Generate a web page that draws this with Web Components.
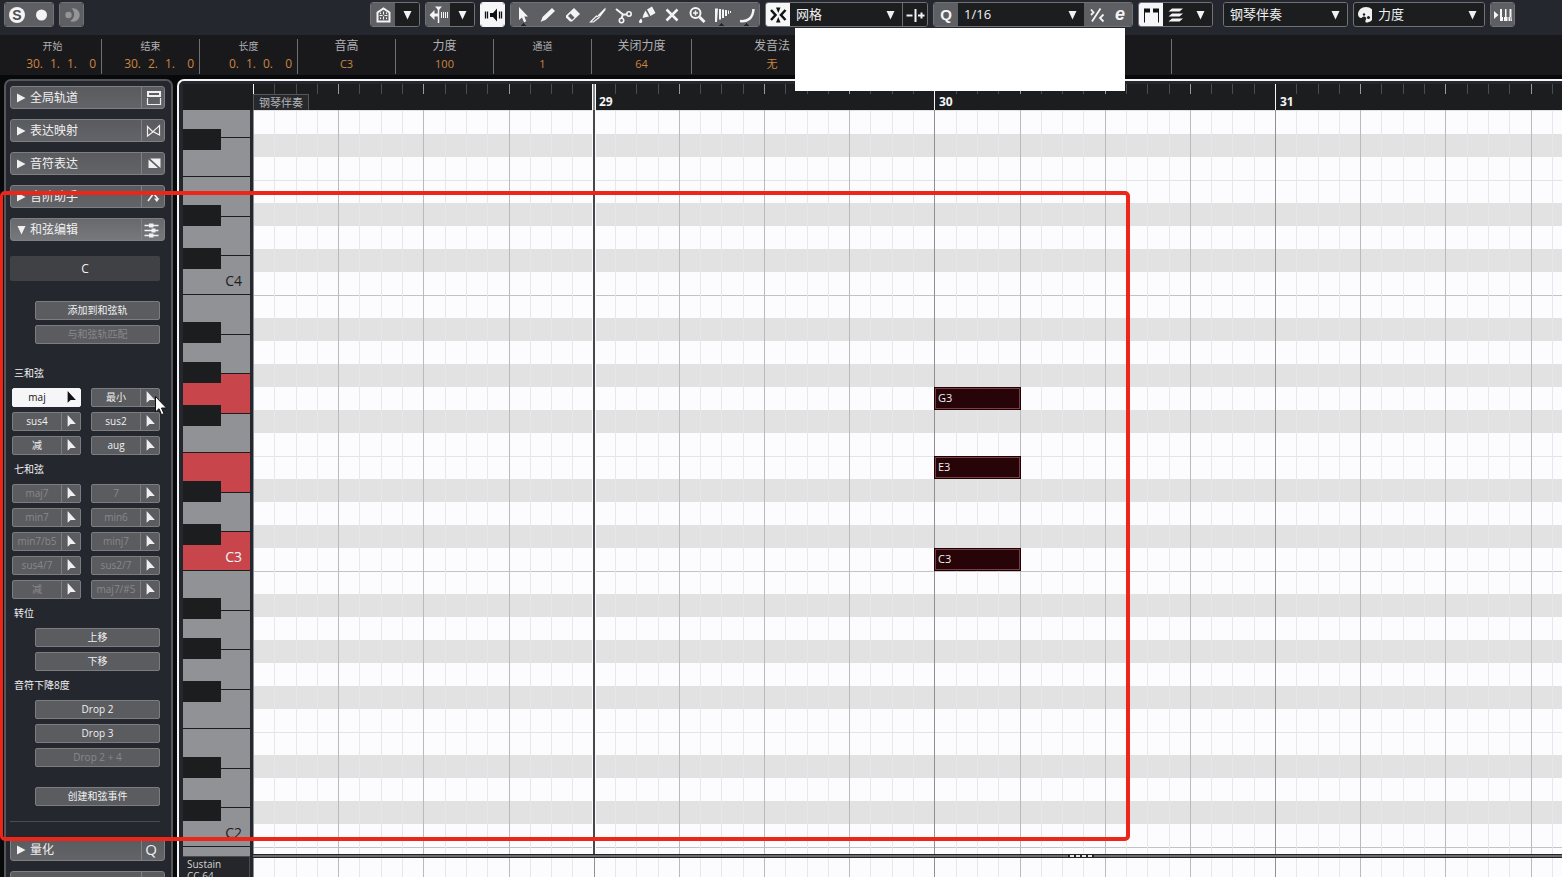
<!DOCTYPE html>
<html lang="zh-CN">
<head>
<meta charset="utf-8">
<title>钢琴伴奏</title>
<style>
  html, body {
    margin: 0;
    height: 100%;
  }
  body {
    overflow: hidden;
    background: #08090b;
    color: #f0f0f2;
    font: 12px/16px "Open Sans", "Noto Sans CJK SC", sans-serif;
  }
</style>
</head>
<body>
<key-editor></key-editor>

<script>
const ICONS = {
  solo: '<circle cx="12" cy="12" r="8" fill="currentColor"/><text x="12" y="17" text-anchor="middle" font-size="14" font-weight="800" fill="#4c4d50">S</text>',
  record: '<circle cx="12.500" cy="12" r="5.500" fill="currentColor"/>',
  moon: '<g fill="#949598"><circle cx="8.500" cy="12" r="3.200"/><path d="M11.500 5.500A6.700 6.700 0 1 1 10 18A7.500 7.500 0 0 0 11.500 5.500z"/></g>',
  home: '<path d="M6.500 18.500V9.500L12.500 5.500l6 4v9z" fill="none" stroke="currentColor" stroke-width="2"/><path d="M12.500 8.500v3M12.500 13.500v3M8.500 12.500h3M13.500 12.500h3M9.500 16v-1.500M15.500 16v-1.500M9.500 9.500V11M15.500 9.500V11" stroke="currentColor"/>',
  insert: '<path d="M3.500 12l5-5v3.500h3.500v3H8.500V17zM9 3.500h7l-3.500 4z" fill="currentColor"/><path d="M12.500 5v15" stroke="currentColor" stroke-width="1.500"/><path d="M15.500 9v6M17.500 9v6M19.500 9v6M21.500 9v6" stroke="currentColor"/>',
  speaker: '<path d="M9 10h3l4-4.500v13L12 14H9z" fill="currentColor"/><path d="M4.500 8.500v7M6.500 8.500v7M18.500 8.500v7M20.500 8.500v7" stroke="currentColor" stroke-width="1.300"/>',
  select: '<path d="M8 4v13l3-2.600 2 4.800 2.300-1-2-4.700H17z" fill="currentColor"/>',
  draw: '<path d="M5 18.500l1.500-4.500L16 5l3 3-9.500 9zM4.500 19l1-2 1 1z" fill="currentColor"/>',
  erase: '<path d="M5 12.500L13 5l6 6-8 7.500H9l-4-4z" fill="currentColor"/><path d="M7 13l2.500-2.500 4 4L11 17z" fill="#5e5f62"/>',
  trim: '<path d="M11.500 12.500L19.500 4.500v2.500L14 14z" fill="currentColor"/><path d="M10.500 13L4.500 19h3l5.500-4.500z" fill="none" stroke="currentColor" stroke-width="1.200"/>',
  split: '<g fill="none" stroke="currentColor" stroke-width="2"><path d="M5 6l7 5.500h4M12 11l-1.500 4.500"/><circle cx="18" cy="11" r="2.200" stroke-width="1.600"/><circle cx="10.500" cy="17.500" r="2.200" stroke-width="1.600"/></g>',
  glue: '<path d="M12 6.500l5-3 3.500 6.500-5 3zM10.500 7.500L14 13.500 9.500 14.500l-2 .5 1-3.500zM6 15.500c1.500 2 2 4.500-.5 4.500S4 17.500 6 15.500z" fill="currentColor"/>',
  mute: '<path d="M6.500 6.500l11 11M17.500 6.500l-11 11" stroke="currentColor" stroke-width="2.500"/>',
  zoom: '<g fill="none" stroke="currentColor"><circle cx="10.500" cy="10" r="5" stroke-width="2"/><path d="M14.500 14l5 5" stroke-width="3"/><path d="M8 10h5M10.500 7.500v5" stroke-width="1.500"/></g>',
  warp: '<path d="M5 5.500h3l-1 13.500H5zM9 6h2v10.500H9zM12 6.500h2V15h-2zM15 7h2v6h-2zM18 7.500h1V11h-1zM20 8h1v2h-1z" fill="currentColor"/>',
  line: '<path d="M5 18c8 1 13-3 13.500-12" fill="none" stroke="currentColor" stroke-width="2.500"/>',
  snap: '<path d="M5 7l4.500 5L5 17M19.500 7L15 12l4.500 5" fill="none" stroke="currentColor" stroke-width="2.500"/><path d="M10 4.500h4.500L12.250 10zM10 19.500h4.500L12.250 14z" fill="currentColor"/>',
  gridtype: '<path d="M3.500 12.500h6M12.500 6v13M15 12.500h6.500M18.500 9.500v6" fill="none" stroke="currentColor" stroke-width="2"/>',
  quantize: '<text x="12" y="17" text-anchor="middle" font-size="15" font-weight="600" fill="currentColor">Q</text>',
  swing: '<path d="M16.500 5.500L8 18.500M7 6.500l2.500 3L7 12M19.500 11.500L16 15l3.500 3.500" fill="none" stroke="currentColor" stroke-width="1.800"/>',
  setup: '<text x="12" y="17" text-anchor="middle" font-size="18" font-weight="600" font-style="italic" fill="currentColor">e</text>',
  brackets: '<path d="M5 5.500h6v4H6v10H5zM20 5.500h-6v4h5v10h1z" fill="currentColor"/>',
  layers: '<path d="M9 5.500h11l-3.500 3H5.500zM9 10.500h11l-3.500 3H5.500zM9 15.500h11l-3.500 3H5.500z" fill="currentColor"/>',
  palette: '<path d="M12 4c4.500 0 8 3 8 7.500 0 3-1 5-3 6.500-2 1.500-5 2-5.500 1-.5-2 1.500-3 .5-4.500S9 13 8 14.500 4 14 4 11.500C4 7 7.500 4 12 4z" fill="currentColor"/><circle cx="10" cy="11.500" r="1.200" fill="#1d1e20"/><circle cx="14.500" cy="14.500" r="1.500" fill="#1d1e20"/>',
  keys: '<path d="M3 8l4.500 4L3 16zM9 6h2v8h1v4H9zM13 18v-4h1V6h1.500v8h1v4zM17.500 18v-4h1V6H20v8h-.5v4zM20.500 14V6H21v12h-1z" fill="currentColor"/>',
  down: '<path d="M8.500 8h8l-4 8.500z" fill="currentColor"/>',
  right: '<path d="M8 7.500l8.500 4.500L8 16.500z" fill="currentColor"/>',
  tracks: '<path d="M6 6h12v4H6z" fill="none" stroke="currentColor" stroke-width="2"/><path d="M5.500 12v6.500h13V12" fill="none" stroke="currentColor" stroke-width="1.200"/>',
  bowtie: '<path d="M5.500 7.500V17l5.500-4zM17.500 6.500v9.500L11 12.500z" fill="none" stroke="currentColor" stroke-width="1.200"/>',
  expression: '<path d="M8 6.500h10.500V16zM6.500 7.500L16 16H6.500z" fill="currentColor"/>',
  scale: '<path d="M6 16l6-8M12 9l4 5" fill="none" stroke="currentColor" stroke-width="1.600"/><path d="M12 13.500h5.500l-2.700 3.500z" fill="currentColor"/>',
  chords: '<path d="M2.500 7.500h14M2.500 12.500h14M2.500 17.500h14" stroke="currentColor" stroke-width="1.500"/><path d="M7 5.500h4.500v4H7zM9.500 10.500h4v4h-4zM7 15.500h4.500v4H7z" fill="currentColor"/>',
  q: '<text x="9" y="17" text-anchor="middle" font-size="15" fill="currentColor">Q</text>',
  drag: '<path d="M7.500 4v15.500l4-3.500h7z" fill="currentColor"/>'
};

// 3 bars take 1022px, a bar holds 16 steps
const FIRST_BAR = 28;
const stepX = step => Math.round((step * 1022) / 48);

const ROWS = ['B', 'A#', 'A', 'G#', 'G', 'F#', 'F', 'E', 'D#', 'D', 'C#', 'C'];
const ROW_HEIGHT = 23;
// the roll starts below the upper rows of octave 4
const TOP_OFFSET = 91;

class UiIcon extends HTMLElement {
  constructor() {
    super();
    this.attachShadow({ mode: 'open' });
  }

  connectedCallback() {
    this.shadowRoot.innerHTML = `
      <style>
        :host { display: block; width: 24px; height: 24px; flex: none; }
        svg { display: block; width: 100%; height: 100%; }
      </style>
      <svg viewBox="0 0 24 24" aria-hidden="true">${ICONS[this.getAttribute('name')] || ''}</svg>`;
  }
}
customElements.define('ui-icon', UiIcon);

class ToolButton extends HTMLElement {
  constructor() {
    super();
    this.attachShadow({ mode: 'open' });
  }

  connectedCallback() {
    this.shadowRoot.innerHTML = `
      <style>
        :host { display: flex; flex: 1 1 24px; min-width: 0; }
        button {
          flex: 1;
          display: flex;
          align-items: center;
          justify-content: center;
          border: 0;
          padding: 0;
          min-width: 0;
          background: #5e5f62;
          color: #f4f4f6;
        }
        :host([dark]) button { background: #1c1d1f; }
        :host([on]) button { background: #f6f6f8; color: #111214; }
        :host([split]) button { border-left: 1px solid #6c6d70; }
        :host([notch]) button {
          background: conic-gradient(from 135deg at 50% 20px, #24272d 90deg, #5e5f62 0);
        }
      </style>
      <button type="button" aria-label="${this.getAttribute('label')}">
        <ui-icon name="${this.getAttribute('icon')}"></ui-icon>
      </button>`;
  }
}
customElements.define('tool-button', ToolButton);

class ToolSelect extends HTMLElement {
  constructor() {
    super();
    this.attachShadow({ mode: 'open' });
  }

  connectedCallback() {
    this.shadowRoot.innerHTML = `
      <style>
        :host { display: grid; flex: 1; background: #1c1d1f; min-width: 0; }
        select, ui-icon { grid-area: 1 / 1; }
        select {
          appearance: none;
          border: 0;
          margin: 0;
          padding: 0 24px 2px 6px;
          width: 100%;
          background: none;
          color: inherit;
          font: inherit;
          font-size: 13px;
        }
        ui-icon { justify-self: end; align-self: center; pointer-events: none; }
      </style>
      <select aria-label="${this.getAttribute('label')}">
        <option>${this.getAttribute('value')}</option>
      </select>
      <ui-icon name="down"></ui-icon>`;
  }
}
customElements.define('tool-select', ToolSelect);

class ToolGroup extends HTMLElement {
  constructor() {
    super();
    this.attachShadow({ mode: 'open' });
  }

  connectedCallback() {
    this.shadowRoot.innerHTML = `
      <style>
        :host {
          display: flex;
          box-sizing: border-box;
          height: 25px;
          width: calc(var(--cells, 1) * 25px);
          border: 1px solid #717275;
          border-radius: 3px;
          overflow: hidden;
          background: #1c1d1f;
        }
        :host([on]) { border-color: #f6f6f8; background: #f6f6f8; }
      </style>
      <slot></slot>`;
  }
}
customElements.define('tool-group', ToolGroup);

class EditorToolbar extends HTMLElement {
  constructor() {
    super();
    this.attachShadow({ mode: 'open' });
  }

  connectedCallback() {
    this.shadowRoot.innerHTML = `
      <style>
        :host {
          display: flex;
          gap: 5px;
          box-sizing: border-box;
          height: 35px;
          padding: 2px 47px 0 4px;
          background: #24272d;
        }
        .space { flex: 1; }
        .pair { --cells: 2; }
        .tools { --cells: 10; }
        .snap { width: 163px; }
        .quantize { --cells: 8; }
        .parts { --cells: 3; margin-right: 5px; }
        .part { --cells: 5; }
        .colors { width: 132px; }
        .fixed { flex: none; }
        .beside { margin-left: -6px; }
      </style>
      <tool-group class="pair">
        <tool-button icon="solo" label="独奏编辑器"></tool-button>
        <tool-button icon="record" label="录制"></tool-button>
      </tool-group>
      <tool-group><tool-button icon="moon" label="保留"></tool-button></tool-group>
      <div class="space"></div>
      <tool-group class="pair">
        <tool-button icon="home" label="编辑"></tool-button>
        <tool-button icon="down" label="编辑选项" dark></tool-button>
      </tool-group>
      <tool-group class="pair">
        <tool-button icon="insert" label="自动滚动"></tool-button>
        <tool-button icon="down" label="滚动选项" dark></tool-button>
      </tool-group>
      <tool-group on><tool-button icon="speaker" label="声音反馈" on></tool-button></tool-group>
      <tool-group class="tools">
        <tool-button icon="select" label="选择" notch></tool-button>
        <tool-button icon="draw" label="绘制"></tool-button>
        <tool-button icon="erase" label="擦除"></tool-button>
        <tool-button icon="trim" label="修剪"></tool-button>
        <tool-button icon="split" label="分割"></tool-button>
        <tool-button icon="glue" label="粘合"></tool-button>
        <tool-button icon="mute" label="静音"></tool-button>
        <tool-button icon="zoom" label="缩放"></tool-button>
        <tool-button icon="warp" label="时间扭曲" notch></tool-button>
        <tool-button icon="line" label="线条" notch></tool-button>
      </tool-group>
      <tool-group class="snap">
        <tool-button class="fixed" icon="snap" label="吸附" on></tool-button>
        <tool-select label="吸附类型" value="网格"></tool-select>
        <tool-button class="fixed" icon="gridtype" label="网格类型" dark split></tool-button>
      </tool-group>
      <tool-group class="quantize">
        <tool-button class="fixed" icon="quantize" label="应用量化"></tool-button>
        <tool-select label="量化预设" value="1/16"></tool-select>
        <tool-button class="fixed" icon="swing" label="弹性量化"></tool-button>
        <tool-button class="fixed" icon="setup" label="量化面板"></tool-button>
      </tool-group>
      <tool-group class="parts">
        <tool-button icon="brackets" label="显示部分边界" on></tool-button>
        <tool-button icon="layers" label="仅编辑活动部分" dark></tool-button>
        <tool-button icon="down" label="部分" dark></tool-button>
      </tool-group>
      <tool-group class="part">
        <tool-select label="活动部分" value="钢琴伴奏"></tool-select>
      </tool-group>
      <tool-group class="colors">
        <ui-icon name="palette"></ui-icon>
        <tool-select class="beside" label="事件颜色" value="力度"></tool-select>
      </tool-group>
      <tool-group><tool-button icon="keys" label="步进输入"></tool-button></tool-group>`;
  }
}
customElements.define('editor-toolbar', EditorToolbar);

class InfoField extends HTMLElement {
  constructor() {
    super();
    this.attachShadow({ mode: 'open' });
  }

  connectedCallback() {
    const parts = this.getAttribute('value').split(' ');
    const value = parts.length > 1
      ? `<div class="position">${parts.map(part => `<span>${part}</span>`).join('')}</div>`
      : `<div class="value">${parts[0]}</div>`;

    this.shadowRoot.innerHTML = `
      <style>
        :host {
          display: flex;
          flex-direction: column;
          gap: 4px;
          box-sizing: border-box;
          width: 98px;
          border-right: 1px solid #6f7073;
          text-align: center;
          line-height: 14px;
        }
        .label { height: 14px; font-size: 12px; color: #b0b1b4; }
        :host([small]) .label { font-size: 10px; }
        .value, .position { color: #cb8640; font-size: 11px; }
        .position {
          display: grid;
          grid-template-columns: repeat(3, 17px) 19px;
          justify-content: end;
          padding-right: 5px;
          text-align: right;
          font-size: 12px;
        }
      </style>
      <div class="label">${this.getAttribute('label')}</div>
      ${value}`;
  }
}
customElements.define('info-field', InfoField);

class InfoLine extends HTMLElement {
  constructor() {
    super();
    this.attachShadow({ mode: 'open' });
  }

  connectedCallback() {
    this.shadowRoot.innerHTML = `
      <style>
        :host {
          display: flex;
          box-sizing: border-box;
          height: 40px;
          padding: 4px 0 1px 4px;
          background: #19191c;
        }
        .wide { width: 100px; }
        .articulation { width: 160px; border-right: 0; }
        .rest { width: 319px; border-right: 1px solid #6f7073; }
      </style>
      <info-field label="开始" value="30. 1. 1. 0" small></info-field>
      <info-field label="结束" value="30. 2. 1. 0" small></info-field>
      <info-field label="长度" value="0. 1. 0. 0" small></info-field>
      <info-field label="音高" value="C3"></info-field>
      <info-field label="力度" value="100"></info-field>
      <info-field label="通道" value="1" small></info-field>
      <info-field label="关闭力度" value="64" class="wide"></info-field>
      <info-field label="发音法" value="无" class="articulation"></info-field>
      <div class="rest"></div>`;
  }
}
customElements.define('info-line', InfoLine);

class InspectorSection extends HTMLElement {
  constructor() {
    super();
    this.attachShadow({ mode: 'open' });
  }

  connectedCallback() {
    const open = this.hasAttribute('open');
    this.shadowRoot.innerHTML = `
      <style>
        :host { display: block; margin-bottom: 10px; }
        button {
          display: flex;
          align-items: center;
          box-sizing: border-box;
          width: 100%;
          height: 23px;
          padding: 0;
          border: 1px solid #7d7f82;
          border-radius: 3px;
          background: linear-gradient(#5a5b5e, #636467);
          color: inherit;
          font: inherit;
          text-align: left;
          overflow: hidden;
        }
        :host([open]) button { background: linear-gradient(#68696c, #77787b); }
        .arrow { margin-left: -2px; }
        .title { flex: 1; margin-left: -3px; }
        .icon { border-left: 1px solid #808184; margin-right: -2px; }
      </style>
      <button type="button" aria-expanded="${open}">
        <ui-icon class="arrow" name="${open ? 'down' : 'right'}"></ui-icon>
        <span class="title"><slot></slot></span>
        <ui-icon class="icon" name="${this.getAttribute('icon')}"></ui-icon>
      </button>`;
  }
}
customElements.define('inspector-section', InspectorSection);

class PanelButton extends HTMLElement {
  constructor() {
    super();
    this.attachShadow({ mode: 'open' });
  }

  connectedCallback() {
    this.shadowRoot.innerHTML = `
      <style>
        :host { display: flex; height: 19px; margin-left: 25px; }
        button {
          flex: 1;
          border: 1px solid #7b7d80;
          border-radius: 2px;
          padding: 0 0 1px;
          background: #5b5c5f;
          color: #f0f0f2;
          font: inherit;
          font-size: 10px;
          line-height: 16px;
        }
        button:disabled { color: #87888b; }
      </style>
      <button type="button" ${this.hasAttribute('disabled') ? 'disabled' : ''}><slot></slot></button>`;
  }
}
customElements.define('panel-button', PanelButton);

class ChordButton extends HTMLElement {
  constructor() {
    super();
    this.attachShadow({ mode: 'open' });
  }

  connectedCallback() {
    this.shadowRoot.innerHTML = `
      <style>
        :host {
          display: flex;
          box-sizing: border-box;
          height: 19px;
          border: 1px solid #7b7d80;
          border-radius: 2px;
          background: #5b5c5f;
          color: #f0f0f2;
          overflow: hidden;
        }
        button {
          display: flex;
          justify-content: center;
          align-items: center;
          border: 0;
          padding: 0 0 1px;
          background: none;
          color: inherit;
          font: inherit;
          font-size: 10px;
          line-height: 16px;
        }
        .name { flex: 1; min-width: 0; white-space: nowrap; }
        .name:disabled { color: #87888b; }
        .drag { width: 19px; border-left: 1px solid #7b7d80; }
        ui-icon { width: 18px; height: 18px; }
        :host([on]) { background: #f6f6f8; border-color: #f6f6f8; color: #111214; }
        :host([on]) .drag { border-color: #f6f6f8; }
      </style>
      <button type="button" class="name" ${this.hasAttribute('disabled') ? 'disabled' : ''}><slot></slot></button>
      <button type="button" class="drag" aria-label="拖动"><ui-icon name="drag"></ui-icon></button>`;
  }
}
customElements.define('chord-button', ChordButton);

class EditorInspector extends HTMLElement {
  constructor() {
    super();
    this.attachShadow({ mode: 'open' });
  }

  connectedCallback() {
    this.shadowRoot.innerHTML = `
      <style>
        :host {
          display: block;
          box-sizing: border-box;
          width: 169px;
          padding: 5px 6px 0 4px;
          border: 2px solid #55565a;
          border-bottom: 0;
          border-radius: 7px 7px 0 0;
          background: #24272d;
          overflow: hidden;
        }
        .chords {
          display: flex;
          flex-direction: column;
          gap: 5px;
          margin: 0 5px 16px 0;
          padding: 5px 0 15px;
          border-bottom: 1px solid #4b4d51;
        }
        .chord {
          display: block;
          height: 25px;
          margin-bottom: 15px;
          border-radius: 2px;
          background: #404145;
          text-align: center;
          line-height: 25px;
        }
        h3 {
          margin: 0 0 0 4px;
          height: 19px;
          font-size: 10px;
          font-weight: 400;
          line-height: 18px;
        }
        .gap { margin-top: 15px; }
        .grid {
          display: grid;
          grid-template-columns: 1fr 1fr;
          gap: 5px 10px;
          margin-left: 2px;
        }
      </style>
      <inspector-section icon="tracks">全局轨道</inspector-section>
      <inspector-section icon="bowtie">表达映射</inspector-section>
      <inspector-section icon="expression">音符表达</inspector-section>
      <inspector-section icon="scale">音阶助手</inspector-section>
      <inspector-section icon="chords" open>和弦编辑</inspector-section>
      <div class="chords">
        <output class="chord">C</output>
        <panel-button>添加到和弦轨</panel-button>
        <panel-button disabled>与和弦轨匹配</panel-button>
        <h3 class="gap">三和弦</h3>
        <div class="grid">
          <chord-button on>maj</chord-button>
          <chord-button>最小</chord-button>
          <chord-button>sus4</chord-button>
          <chord-button>sus2</chord-button>
          <chord-button>减</chord-button>
          <chord-button>aug</chord-button>
        </div>
        <h3>七和弦</h3>
        <div class="grid">
          <chord-button disabled>maj7</chord-button>
          <chord-button disabled>7</chord-button>
          <chord-button disabled>min7</chord-button>
          <chord-button disabled>min6</chord-button>
          <chord-button disabled>min7/b5</chord-button>
          <chord-button disabled>minj7</chord-button>
          <chord-button disabled>sus4/7</chord-button>
          <chord-button disabled>sus2/7</chord-button>
          <chord-button disabled>减</chord-button>
          <chord-button disabled>maj7/#5</chord-button>
        </div>
        <h3>转位</h3>
        <panel-button>上移</panel-button>
        <panel-button>下移</panel-button>
        <h3>音符下降8度</h3>
        <panel-button>Drop 2</panel-button>
        <panel-button>Drop 3</panel-button>
        <panel-button disabled>Drop 2 + 4</panel-button>
        <panel-button class="gap">创建和弦事件</panel-button>
      </div>
      <inspector-section icon="q">量化</inspector-section>
      <inspector-section></inspector-section>`;
  }
}
customElements.define('editor-inspector', EditorInspector);

class PianoOctave extends HTMLElement {
  constructor() {
    super();
    this.attachShadow({ mode: 'open' });
  }

  connectedCallback() {
    const octave = this.getAttribute('number');
    const pressed = (this.getAttribute('pressed') || '').split(' ');
    const white = ['B', 'A', 'G', 'F', 'E', 'D', 'C']
      .map(key => `<div class="white ${pressed.includes(key) ? 'pressed' : ''}">${key === 'C' ? key + octave : ''}</div>`)
      .join('');
    const black = [27, 67, 110, 186, 229]
      .map(top => `<div class="black" style="top: ${top}px"></div>`)
      .join('');

    this.shadowRoot.innerHTML = `
      <style>
        :host {
          display: grid;
          grid-template-rows: 40px 39px 40px 39px 40px 39px 39px;
          position: relative;
          flex: none;
        }
        .white {
          box-sizing: border-box;
          padding: 7px 8px 0 0;
          border-bottom: 1px solid #1c1d1f;
          background: #919295;
          color: #1c1d1f;
          font-size: 14px;
          line-height: 36px;
          text-align: right;
        }
        .pressed { background: #c8454b; color: #f4f4f6; }
        .black {
          position: absolute;
          left: 0;
          width: 38px;
          height: 21px;
          background: #1c1d1f;
        }
      </style>
      ${white}${black}`;
  }
}
customElements.define('piano-octave', PianoOctave);

class BeatLines extends HTMLElement {
  constructor() {
    super();
    this.attachShadow({ mode: 'open' });
  }

  connectedCallback() {
    const ruler = this.hasAttribute('ruler');
    // wide windows show up to this many steps
    const steps = Math.ceil((Math.max(window.innerWidth, screen.width) * 48) / 1022);
    let lines = '';
    for (let step = 0; step < steps; step++) {
      const type = step % 16 === 0 ? 'bar' : step % 4 === 0 ? 'beat' : 'step';
      const x = stepX(step);
      const height = !ruler || type === 'bar' ? '100%' : '10';
      lines += `<rect class="${type}" x="${x}" width="1" height="${height}"/>`;
      if (ruler && type === 'bar' && step > 0 && x < window.innerWidth - 300) {
        lines += `<text x="${x + 5}" y="22">${FIRST_BAR + step / 16}</text>`;
      }
    }

    this.shadowRoot.innerHTML = `
      <style>
        :host {
          display: block;
          --bar: #8f9093;
          --beat: #b9babc;
          --step: #e7e7e9;
        }
        :host([ruler]) { --bar: #f4f4f6; --beat: #98999c; --step: #4b4c4f; }
        svg { display: block; width: 100%; height: 100%; }
        .bar { fill: var(--bar); }
        .beat { fill: var(--beat); }
        .step { fill: var(--step); }
        text { font-size: 12px; font-weight: 700; fill: #f4f4f6; }
      </style>
      <svg shape-rendering="crispEdges">${lines}</svg>`;
  }
}
customElements.define('beat-lines', BeatLines);

class MidiNote extends HTMLElement {
  constructor() {
    super();
    this.attachShadow({ mode: 'open' });
  }

  connectedCallback() {
    const pitch = this.getAttribute('pitch');
    const row = ROWS.indexOf(pitch.slice(0, -1)) + (4 - pitch.slice(-1)) * 12;
    const start = stepX(Number(this.getAttribute('start')));
    const end = stepX(Number(this.getAttribute('start')) + Number(this.getAttribute('length')));
    this.style.left = `${start}px`;
    this.style.width = `${end - start + 1}px`;
    this.style.top = `${row * ROW_HEIGHT - TOP_OFFSET}px`;

    this.shadowRoot.innerHTML = `
      <style>
        :host {
          display: block;
          position: absolute;
          box-sizing: border-box;
          height: 23px;
          padding: 1px;
          background: #1d0205;
        }
        div {
          box-sizing: border-box;
          height: 21px;
          padding-left: 2px;
          border: 1px solid #7d3f45;
          background: #260407;
          font-size: 11px;
          line-height: 18px;
        }
      </style>
      <div>${pitch}</div>`;
  }
}
customElements.define('midi-note', MidiNote);

class NoteDisplay extends HTMLElement {
  constructor() {
    super();
    this.attachShadow({ mode: 'open' });
  }

  connectedCallback() {
    const rows = [4, 3, 2, 1]
      .map(() => ROWS.map(key => `<div class="row ${key.length > 1 ? 'sharp' : key}"></div>`).join(''))
      .join('');

    this.shadowRoot.innerHTML = `
      <style>
        :host {
          display: grid;
          grid-template-rows: minmax(0, 1fr);
          position: relative;
          overflow: hidden;
          background: #fcfcfe;
        }
        .rows, beat-lines { grid-area: 1 / 1; min-height: 0; }
        .rows { margin-top: -${TOP_OFFSET}px; height: 0; }
        .row { box-sizing: border-box; height: ${ROW_HEIGHT}px; }
        .sharp { background: #e2e2e3; }
        .B { border-top: 1px solid #c3c3c5; }
        .E { border-top: 1px solid #e4e4e6; }
      </style>
      <div class="rows">${rows}</div>
      <beat-lines></beat-lines>
      <slot></slot>`;
  }
}
customElements.define('note-display', NoteDisplay);

class NoteEditor extends HTMLElement {
  constructor() {
    super();
    this.attachShadow({ mode: 'open' });
  }

  connectedCallback() {
    this.shadowRoot.innerHTML = `
      <style>
        :host {
          display: grid;
          grid-template-columns: 67px 1fr;
          column-gap: 3px;
          box-sizing: border-box;
          padding: 3px 0 0 4px;
          border: solid #f4f4f6;
          border-width: 2px 0 0 2px;
          border-radius: 7px 0 0 0;
          background: #24272d;
          overflow: hidden;
        }
        .left, .right { display: flex; flex-direction: column; min-width: 0; min-height: 0; }
        .right { position: relative; }
        .corner, .ruler { flex: none; height: 26px; background: #1c1d1f; }
        .corner { margin-right: -3px; }
        .keyboard {
          display: flex;
          flex-direction: column;
          flex: 1;
          min-height: 0;
          overflow: hidden;
        }
        .keyboard piano-octave:first-child { margin-top: -${TOP_OFFSET}px; }
        .controller {
          flex: none;
          box-sizing: border-box;
          height: 21px;
          padding: 1px 4px;
          border: 1px solid #4b4c4f;
          border-width: 1px 1px 0 0;
          background: #24262a;
          color: #d4d4d6;
          font-size: 10px;
          line-height: 12px;
          overflow: hidden;
        }
        .ruler { display: grid; grid-template-rows: 26px; }
        .ruler > * { grid-area: 1 / 1; min-width: 0; }
        .part {
          justify-self: start;
          align-self: end;
          box-sizing: border-box;
          height: 16px;
          padding: 0 5px;
          border: 1px solid #55565a;
          border-bottom: 0;
          background: #26282b;
          color: #b4b5b8;
          font-size: 11px;
          line-height: 16px;
          z-index: 1;
        }
        note-display { flex: 1; min-height: 0; }
        .divider {
          display: flex;
          gap: 2px;
          flex: none;
          box-sizing: border-box;
          height: 4px;
          border: solid #232427;
          border-width: 1px 0;
          padding-left: calc(62% + 5px);
          background: #6b6b70;
        }
        .divider i { width: 4px; background: #e4e4e6; box-shadow: 0 0 0 2px #232427; }
        .divider i + i { box-shadow: 2px 0 0 #232427; }
        .lane { flex: none; height: 19px; background: #fcfcfe; }
        .playhead {
          position: absolute;
          top: 0;
          bottom: 23px;
          left: ${stepX(16) - 2}px;
          width: 2px;
          border: 1px solid #fcfcfe;
          border-width: 0 1px;
          background: linear-gradient(#8a8b8e 26px, #47484b 0);
        }
      </style>
      <div class="left">
        <div class="corner"></div>
        <div class="keyboard">
          <piano-octave number="4"></piano-octave>
          <piano-octave number="3" pressed="G E C"></piano-octave>
          <piano-octave number="2"></piano-octave>
          <piano-octave number="1"></piano-octave>
        </div>
        <div class="controller">Sustain<br>CC 64</div>
      </div>
      <div class="right">
        <div class="ruler">
          <beat-lines ruler></beat-lines>
          <div class="part">钢琴伴奏</div>
        </div>
        <note-display>
          <midi-note pitch="G3" start="32" length="4"></midi-note>
          <midi-note pitch="E3" start="32" length="4"></midi-note>
          <midi-note pitch="C3" start="32" length="4"></midi-note>
        </note-display>
        <div class="divider"><i></i><i></i><i></i><i></i></div>
        <beat-lines class="lane"></beat-lines>
        <div class="playhead"></div>
      </div>`;
  }
}
customElements.define('note-editor', NoteEditor);

class KeyEditor extends HTMLElement {
  constructor() {
    super();
    this.attachShadow({ mode: 'open' });
  }

  connectedCallback() {
    this.shadowRoot.innerHTML = `
      <style>
        :host { display: flex; flex-direction: column; position: relative; height: 100vh; }
        main {
          display: grid;
          grid-template-columns: auto 1fr;
          grid-template-rows: minmax(0, 1fr);
          gap: 4px;
          flex: 1;
          min-height: 0;
          padding: 4px 0 0 4px;
        }
        note-editor { min-width: 0; }
        .cover, .frame, .pointer { position: absolute; pointer-events: none; }
        .cover { left: 795px; top: 28px; width: 330px; height: 63px; background: #fff; }
        .frame {
          left: 0;
          top: 191px;
          box-sizing: border-box;
          width: 1130px;
          height: 650px;
          border: 4px solid #ee2519;
          border-left-width: 3px;
          border-radius: 5px;
        }
        .pointer { left: 154px; top: 395px; width: 14px; height: 22px; }
      </style>
      <editor-toolbar></editor-toolbar>
      <info-line></info-line>
      <main>
        <editor-inspector></editor-inspector>
        <note-editor></note-editor>
      </main>
      <div class="cover"></div>
      <div class="frame"></div>
      <svg class="pointer" viewBox="0 0 14 22" aria-hidden="true">
        <path d="M1.500 1.500v15.500l3.500-3.300 2.500 6 2.500-1-2.500-5.700h5z" fill="#fff" stroke="#111" />
      </svg>`;
  }
}
customElements.define('key-editor', KeyEditor);
</script>
</body>
</html>
